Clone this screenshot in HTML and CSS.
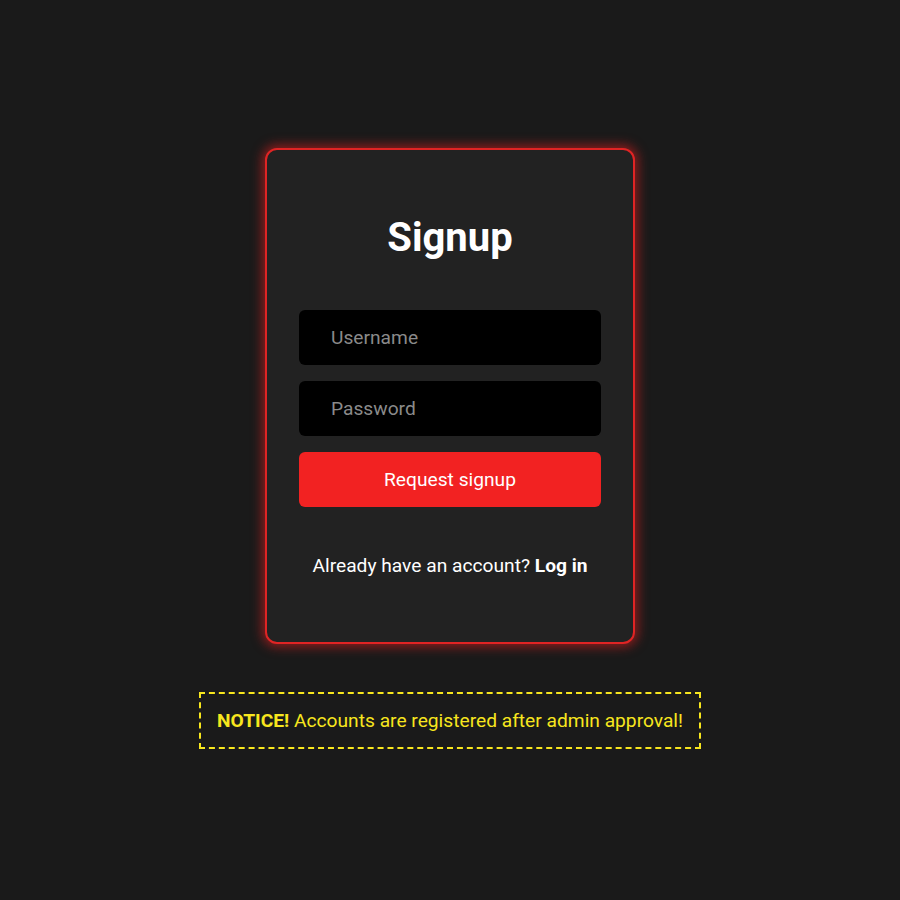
FILE: index.html
```html
<!DOCTYPE html>
<html lang="en">
<head>
<meta charset="utf-8">
<title>Signup</title>
<link rel="stylesheet" href="styles.css">
</head>
<body>
<main class="page">
  <section class="card">
    <h1 class="title">Signup</h1>
    <form class="form">
      <input class="field" type="text" placeholder="Username">
      <input class="field" type="password" placeholder="Password">
      <button class="btn" type="button">Request signup</button>
    </form>
    <p class="alt">Already have an account? <a class="alt-link" href="#">Log in</a></p>
  </section>
  <div class="notice"><strong>NOTICE!</strong> Accounts are registered after admin approval!</div>
</main>
</body>
</html>
```
FILE: styles.css
```css
* { box-sizing: border-box; }
html, body { margin: 0; padding: 0; }
body {
  background: #1a1a1a;
  font-family: Roboto, "Liberation Sans", sans-serif;
  color: #fff;
}
.page {
  min-height: 100vh;
  display: flex;
  flex-direction: column;
  align-items: center;
  justify-content: center;
  gap: 48px;
  padding-bottom: 4px;
}
.card {
  width: 370px;
  background: #222222;
  border: 2px solid #e02424;
  border-radius: 12px;
  box-shadow: 0 0 11px 3px rgba(205, 30, 30, 0.65);
  padding: 64px 32px 65px;
  display: flex;
  flex-direction: column;
  align-items: stretch;
}
.title {
  margin: 0 0 48px;
  text-align: center;
  font-size: 40px;
  font-weight: 700;
  line-height: 48px;
  color: #fff;
}
.form {
  display: flex;
  flex-direction: column;
  gap: 16px;
}
.field {
  height: 55px;
  background: #000;
  border: none;
  border-radius: 6px;
  padding: 0 32px;
  font-family: inherit;
  font-size: 19.2px;
  color: #fff;
  outline: none;
}
.field::placeholder { color: #8a8a8a; }
.btn {
  height: 55px;
  background: #f22222;
  border: none;
  border-radius: 6px;
  font-family: inherit;
  font-size: 19.2px;
  color: #fff;
  cursor: pointer;
}
.alt {
  margin: 48px 0 0;
  text-align: center;
  font-size: 19.2px;
  line-height: 22px;
}
.alt-link {
  color: #fff;
  font-weight: 700;
  text-decoration: none;
}
.notice {
  border: 2px dashed #f7e61e;
  padding: 16px;
  color: #f7e61e;
  font-size: 19.2px;
  line-height: 21px;
}
.notice strong { font-weight: 700; }
```
